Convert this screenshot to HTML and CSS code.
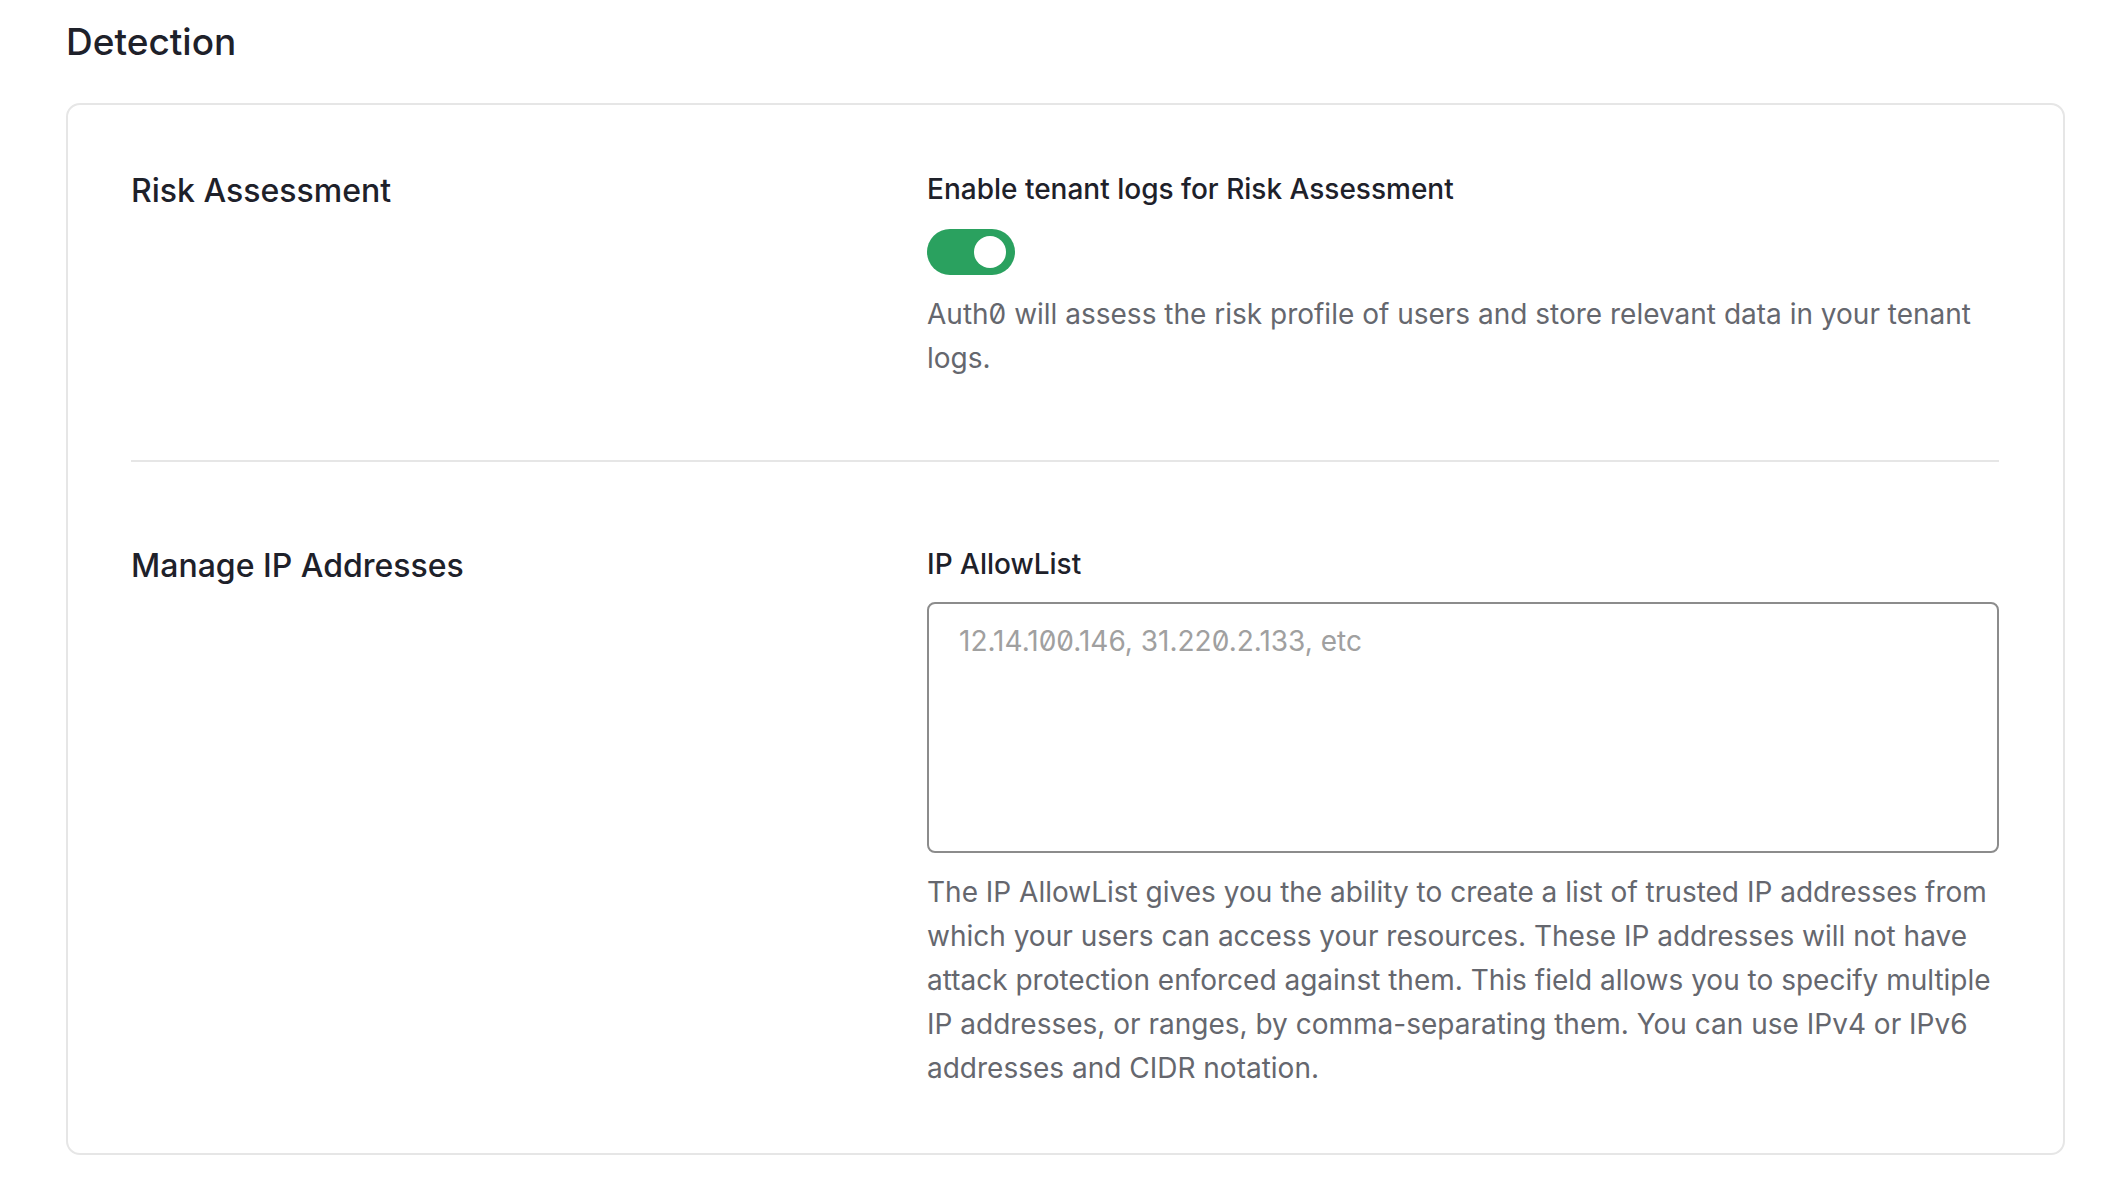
FILE: index.html
```html
<!DOCTYPE html>
<html lang="en">
<head>
<meta charset="utf-8">
<title>Detection</title>
<link rel="stylesheet" href="styles.css">
</head>
<body>
<main class="page">
  <h1 class="page-title">Detection</h1>
  <section class="card">
    <div class="row row-first">
      <h2 class="row-title">Risk Assessment</h2>
      <div class="row-body">
        <label class="field-label" for="risk-toggle">Enable tenant logs for Risk Assessment</label>
        <div class="toggle" id="risk-toggle" role="switch" aria-checked="true"><span class="knob"></span></div>
        <p class="help">Auth0 will assess the risk profile of users and store relevant data in your tenant logs.</p>
      </div>
    </div>
    <div class="divider"></div>
    <div class="row row-second">
      <h2 class="row-title">Manage IP Addresses</h2>
      <div class="row-body">
        <label class="field-label" for="allow">IP AllowList</label>
        <textarea id="allow" class="textarea" placeholder="12.14.100.146, 31.220.2.133, etc"></textarea>
        <p class="help">The IP AllowList gives you the ability to create a list of trusted IP addresses from which your users can access your resources. These IP addresses will not have attack protection enforced against them. This field allows you to specify multiple IP addresses, or ranges, by comma-separating them. You can use IPv4 or IPv6 addresses and CIDR notation.</p>
      </div>
    </div>
  </section>
</main>
</body>
</html>
```

FILE: styles.css
```css
* { box-sizing: border-box; }
html, body { margin: 0; padding: 0; background: #ffffff; }
body {
  font-family: Inter, "Noto Sans", "Liberation Sans", sans-serif;
  font-feature-settings: "zero" 1;
  color: #1e212a;
}
.page {
  padding: 20px 57px 0 66px;
}
.page-title {
  margin: 0 0 39px 0;
  font-size: 37px;
  line-height: 44px;
  font-weight: 500;
}
.card {
  border: 2px solid #e6e6e6;
  border-radius: 14px;
  padding: 64px 64px 63px 63px;
}
.row {
  display: grid;
  grid-template-columns: 796px 1fr;
}
.row-first { padding-bottom: 80px; }
.row-second { padding-top: 82px; }
.row-title {
  margin: 0;
  font-size: 32px;
  line-height: 44px;
  font-weight: 500;
  color: #1e212a;
}
.row-body {
  display: flex;
  flex-direction: column;
  align-items: flex-start;
}
.field-label {
  font-size: 28px;
  line-height: 40px;
  font-weight: 500;
  color: #1e212a;
}
.toggle {
  margin-top: 20px;
  width: 88px;
  height: 46px;
  border-radius: 23px;
  background: #2aa15f;
  position: relative;
}
.knob {
  position: absolute;
  top: 7px;
  right: 9px;
  width: 32px;
  height: 32px;
  border-radius: 50%;
  background: #ffffff;
}
.help {
  margin: 17px 0 0 0;
  font-size: 28px;
  line-height: 44px;
  color: #65676e;
}
.divider {
  height: 2px;
  background: #e6e6e6;
}
.textarea {
  margin-top: 18px;
  width: 100%;
  height: 251px;
  border: 2px solid #8c8c8c;
  border-radius: 8px;
  padding: 21px 30px;
  font-family: inherit;
  font-feature-settings: "zero" 1;
  font-size: 28px;
  line-height: 32px;
  color: #1e212a;
  resize: none;
  outline: none;
}
.textarea::placeholder { color: #a0a0a0; }
```
